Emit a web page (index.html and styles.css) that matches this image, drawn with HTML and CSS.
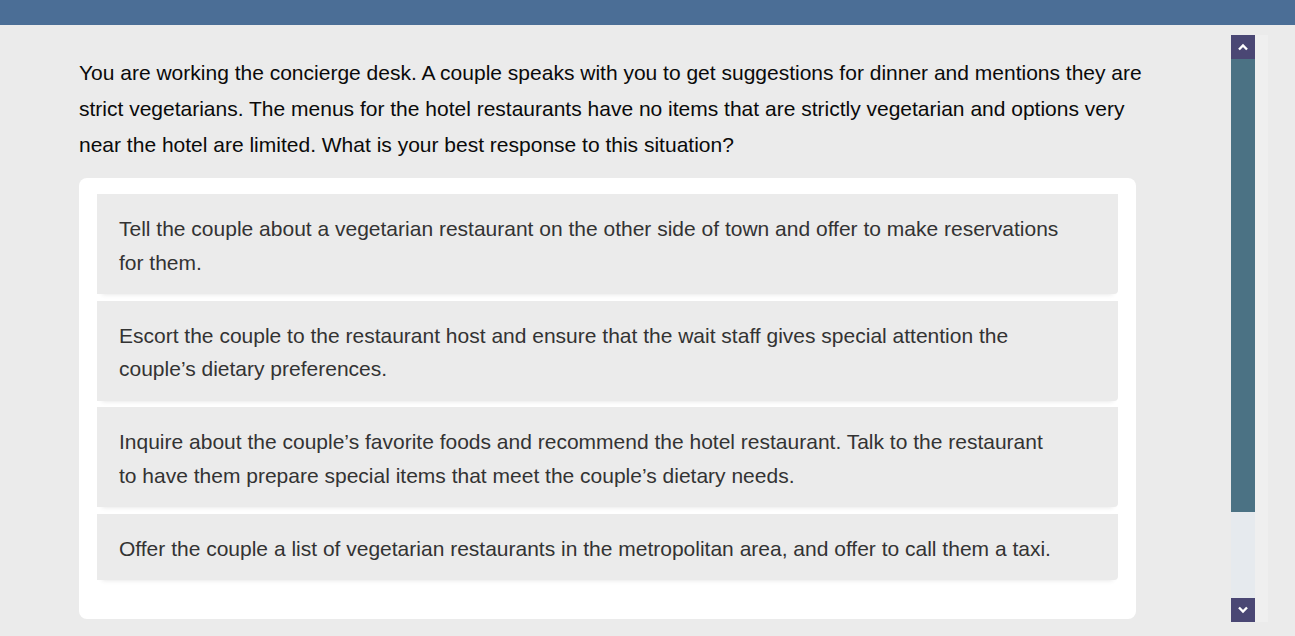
FILE: index.html
```html
<!DOCTYPE html>
<html lang="en">
<head>
  <meta charset="UTF-8">
  <title>Concierge question</title>
  <link rel="stylesheet" href="styles.css">
</head>
<body>
  <div class="top-bar"></div>
  <div class="page">
    <div class="content">
      <p class="question">
        You are working the concierge desk. A couple speaks with you to get suggestions for dinner and mentions they are strict vegetarians. The menus for the hotel restaurants have no items that are strictly vegetarian and options very near the hotel are limited. What is your best response to this situation?
      </p>
      <div class="answers">
        <div class="answer">Tell the couple about a vegetarian restaurant on the other side of town and offer to make reservations for them.</div>
        <div class="answer">Escort the couple to the restaurant host and ensure that the wait staff gives special attention the couple’s dietary preferences.</div>
        <div class="answer">Inquire about the couple’s favorite foods and recommend the hotel restaurant. Talk to the restaurant to have them prepare special items that meet the couple’s dietary needs.</div>
        <div class="answer">Offer the couple a list of vegetarian restaurants in the metropolitan area, and offer to call them a taxi.</div>
      </div>
    </div>
    <div class="scroll">
      <div class="scroll-rail">
        <button class="scroll-btn">
          <svg width="12" height="8" viewBox="0 0 12 8"><path d="M2 6.5 L6 2.5 L10 6.5" fill="none" stroke="#fff" stroke-width="2.4"/></svg>
        </button>
        <div class="scroll-thumb"></div>
        <div class="scroll-track"></div>
        <button class="scroll-btn">
          <svg width="12" height="8" viewBox="0 0 12 8"><path d="M2 1.5 L6 5.5 L10 1.5" fill="none" stroke="#fff" stroke-width="2.4"/></svg>
        </button>
      </div>
      <div class="scroll-edge"></div>
    </div>
  </div>
</body>
</html>
```

FILE: styles.css
```css
body { margin:0; font-family:"Liberation Sans", Arial, sans-serif; background:#ebebeb; }
.top-bar { height:25px; background:#4b6e96; }
.page { display:flex; height:611px; overflow:hidden; }
.content { width:1071px; padding:30px 0 0 79px; }
.question {
  margin:0 0 15px 0; font-size:21px; line-height:36px; color:#0a0a0a;
}
.answers {
  width:1021px; background:#fff; border-radius:8px;
  padding:16px 18px 39px 18px;
  display:flex; flex-direction:column; gap:6.5px;
}
.answer {
  background:#ebebeb; color:#333; font-size:21px; line-height:33.5px;
  padding:18px 56px 15px 22px;
  border-bottom-right-radius:4px;
  box-shadow:0 5px 5px -5px rgba(0,0,0,0.12);
}
.scroll { display:flex; margin:10px 0 0 81px; height:587px; }
.scroll-rail { width:24px; display:flex; flex-direction:column; }
.scroll-edge { width:13px; background:#efefef; }
.scroll-btn {
  width:24px; height:24px; border:none; padding:0; background:#4a4774;
  display:flex; align-items:center; justify-content:center;
}
.scroll-thumb { height:453px; background:#4b7284; }
.scroll-track { flex:1; background:#e6eaee; }
```
